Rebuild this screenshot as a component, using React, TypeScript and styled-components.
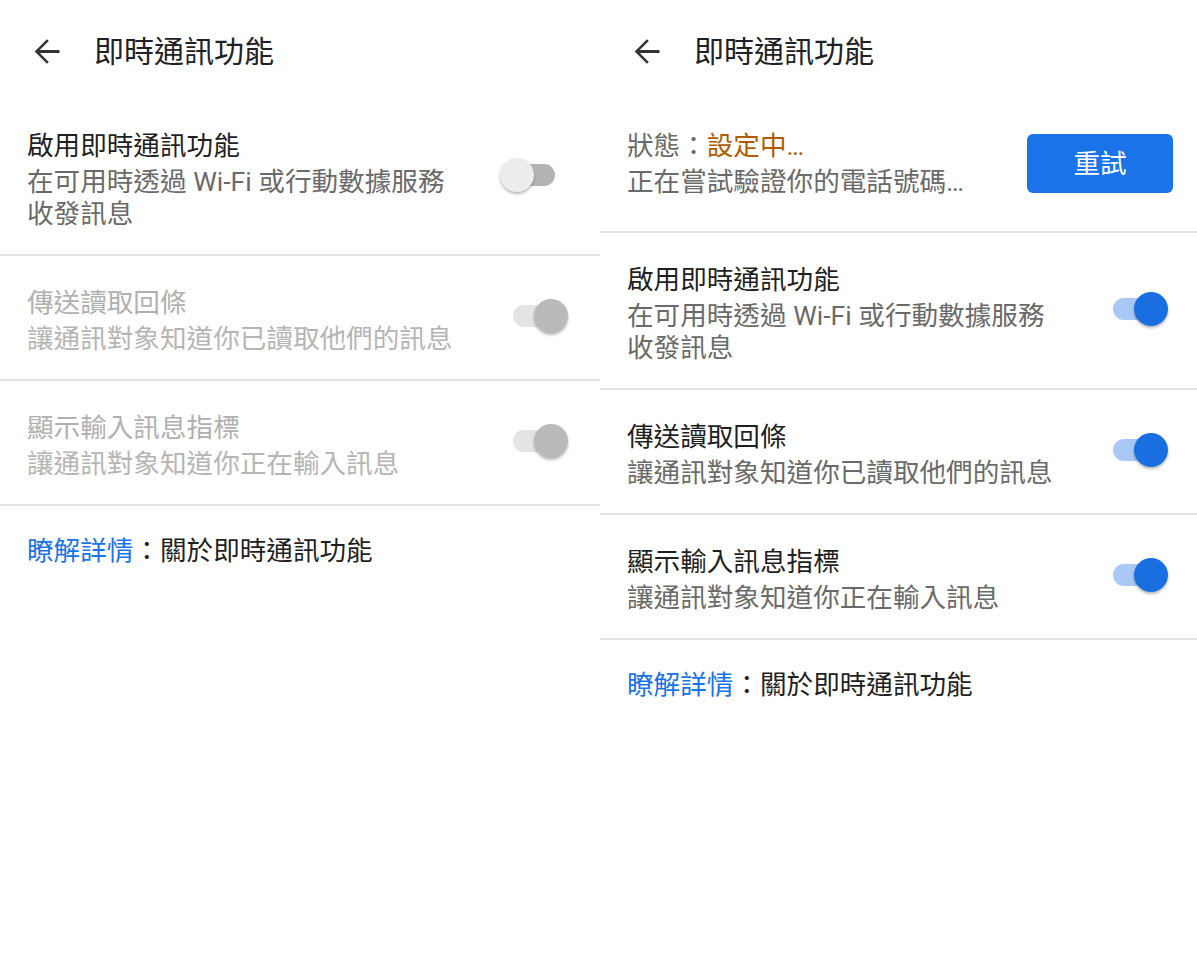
import React from "react";
import styled, { createGlobalStyle } from "styled-components";

const GlobalStyle = createGlobalStyle`
  html, body {
    margin: 0;
    padding: 0;
    background: #ffffff;
  }
  body {
    font-family: Roboto, "Noto Sans CJK TC", "Noto Sans", sans-serif;
    -webkit-font-smoothing: antialiased;
  }
`;

const Screen = styled.div`
  display: grid;
  grid-template-columns: 600px 600px;
  width: 1197px;
  height: 961px;
  overflow: hidden;
  background: #fff;
`;

const Panel = styled.section`
  display: flex;
  flex-direction: column;
  width: 600px;
`;

const Header = styled.header`
  display: flex;
  align-items: center;
  height: 99px;
  padding: 4px 0 0 27px;
  box-sizing: border-box;
  gap: 28px;
`;

const BackButton = styled.button`
  display: flex;
  align-items: center;
  justify-content: center;
  width: 39px;
  height: 39px;
  padding: 0;
  border: none;
  background: transparent;
  color: #333333;
  cursor: pointer;
`;

const HeaderTitle = styled.h1`
  margin: 0;
  font-size: 30px;
  font-weight: 400;
  color: #202124;
  line-height: 40px;
`;

const Row = styled.div`
  display: flex;
  align-items: center;
  justify-content: space-between;
  padding: 29px 32px 24px 27px;
  border-bottom: 2px solid #e3e3e3;
`;

const StatusRow = styled(Row)`
  padding: 29px 27px 33px 27px;
`;

const TextBlock = styled.div`
  display: flex;
  flex-direction: column;
  gap: 2px;
  max-width: 440px;
`;

const Title = styled.div<{ $disabled?: boolean }>`
  font-size: 26.6px;
  line-height: 36px;
  color: ${(p) => (p.$disabled ? "#b0b0b0" : "#1f1f1f")};
`;

const Subtitle = styled.div<{ $disabled?: boolean }>`
  font-size: 26.6px;
  line-height: 32px;
  color: ${(p) => (p.$disabled ? "#b5b5b5" : "#6a6a6a")};
`;

const StatusValue = styled.span`
  color: #b05c00;
`;

const Dots = styled.span`
  letter-spacing: -1.5px;
`;

const RetryButton = styled.button`
  width: 146px;
  height: 59px;
  border: none;
  border-radius: 6px;
  background: #1a73e8;
  color: #ffffff;
  font-family: inherit;
  font-size: 26.6px;
  line-height: 59px;
  padding: 0;
  cursor: pointer;
`;

type SwitchState = "off" | "on" | "disabledOn";

const SwitchRoot = styled.div`
  position: relative;
  width: 68px;
  height: 34px;
  flex: none;
  margin-bottom: 8px;
`;

const Track = styled.div<{ $state: SwitchState }>`
  position: absolute;
  left: 13px;
  right: 13px;
  top: 6px;
  height: 22px;
  border-radius: 11px;
  background: ${(p) =>
    p.$state === "on" ? "#aac8f6" : p.$state === "off" ? "#b4b4b4" : "#e4e4e4"};
`;

const Thumb = styled.div<{ $state: SwitchState }>`
  position: absolute;
  top: 0;
  left: ${(p) => (p.$state === "off" ? "0" : "34px")};
  width: 34px;
  height: 34px;
  border-radius: 50%;
  background: ${(p) =>
    p.$state === "on" ? "#1a6fe0" : p.$state === "off" ? "#ededed" : "#bababa"};
  box-shadow: 0 2px 3px rgba(0, 0, 0, 0.28);
`;

const Switch = ({ state }: { state: SwitchState }) => (
  <SwitchRoot role="switch" aria-checked={state !== "off"}>
    <Track $state={state} />
    <Thumb $state={state} />
  </SwitchRoot>
);

const LinkRow = styled.div`
  padding: 27px 27px;
  font-size: 26.6px;
  line-height: 36px;
  color: #1f1f1f;
`;

const LinkText = styled.a`
  color: #1a73e8;
  text-decoration: none;
`;

const ArrowBack = () => (
  <svg width="39" height="39" viewBox="0 0 24 24" aria-hidden="true">
    <path
      fill="currentColor"
      d="M20 11.1H7.83l5.59-5.59L12.3 4.4 4.7 12l7.6 7.6 1.12-1.11-5.59-5.59H20v-1.8z"
    />
  </svg>
);

type Item = { title: string; sub: string; state: SwitchState; disabled?: boolean };

const leftItems: Item[] = [
  { title: "啟用即時通訊功能", sub: "在可用時透過 Wi-Fi 或行動數據服務收發訊息", state: "off" },
  { title: "傳送讀取回條", sub: "讓通訊對象知道你已讀取他們的訊息", state: "disabledOn", disabled: true },
  { title: "顯示輸入訊息指標", sub: "讓通訊對象知道你正在輸入訊息", state: "disabledOn", disabled: true },
];

const rightItems: Item[] = [
  { title: "啟用即時通訊功能", sub: "在可用時透過 Wi-Fi 或行動數據服務收發訊息", state: "on" },
  { title: "傳送讀取回條", sub: "讓通訊對象知道你已讀取他們的訊息", state: "on" },
  { title: "顯示輸入訊息指標", sub: "讓通訊對象知道你正在輸入訊息", state: "on" },
];

const PageHeader = () => (
  <Header>
    <BackButton aria-label="返回">
      <ArrowBack />
    </BackButton>
    <HeaderTitle>即時通訊功能</HeaderTitle>
  </Header>
);

const SettingRow = ({ item }: { item: Item }) => (
  <Row>
    <TextBlock>
      <Title $disabled={item.disabled}>{item.title}</Title>
      <Subtitle $disabled={item.disabled}>{item.sub}</Subtitle>
    </TextBlock>
    <Switch state={item.state} />
  </Row>
);

const LearnMore = () => (
  <LinkRow>
    <LinkText href="#">瞭解詳情</LinkText>：關於即時通訊功能
  </LinkRow>
);

export default function App() {
  return (
    <>
      <GlobalStyle />
      <Screen>
        <Panel>
          <PageHeader />
          {leftItems.map((it) => (
            <SettingRow key={it.title} item={it} />
          ))}
          <LearnMore />
        </Panel>
        <Panel>
          <PageHeader />
          <StatusRow>
            <TextBlock>
              <Title>
                <Subtitle as="span">狀態：</Subtitle>
                <StatusValue>
                  設定中<Dots>...</Dots>
                </StatusValue>
              </Title>
              <Subtitle>
                正在嘗試驗證你的電話號碼<Dots>...</Dots>
              </Subtitle>
            </TextBlock>
            <RetryButton>重試</RetryButton>
          </StatusRow>
          {rightItems.map((it) => (
            <SettingRow key={it.title} item={it} />
          ))}
          <LearnMore />
        </Panel>
      </Screen>
    </>
  );
}
